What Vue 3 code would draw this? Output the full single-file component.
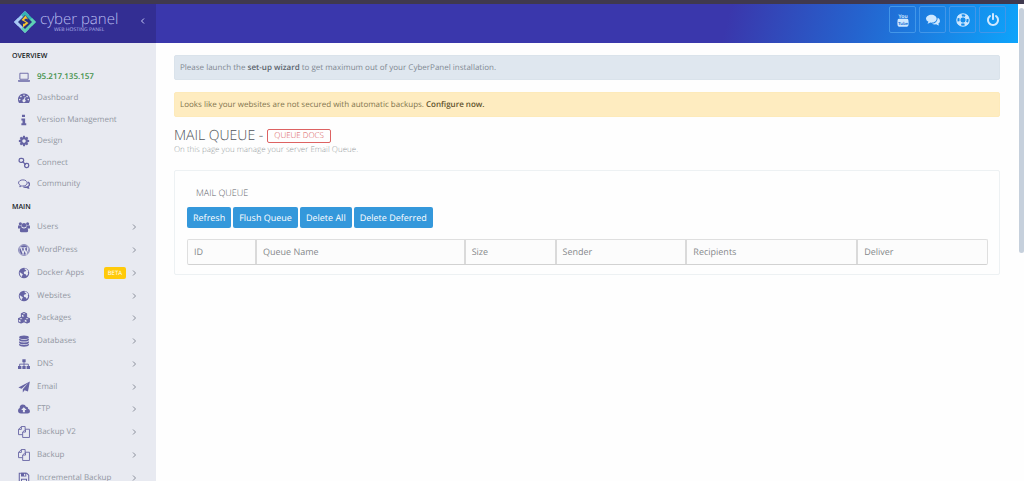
<script setup>
const overview = [
  { icon: 'laptop', label: '95.217.135.157', host: true },
  { icon: 'gauge', label: 'Dashboard' },
  { icon: 'info', label: 'Version Management' },
  { icon: 'cog', label: 'Design' },
  { icon: 'chain', label: 'Connect' },
  { icon: 'comments', label: 'Community' },
]
const main = [
  { icon: 'users', label: 'Users' },
  { icon: 'wordpress', label: 'WordPress' },
  { icon: 'globe', label: 'Docker Apps', badge: 'BETA' },
  { icon: 'globe', label: 'Websites' },
  { icon: 'cubes', label: 'Packages' },
  { icon: 'database', label: 'Databases' },
  { icon: 'sitemap', label: 'DNS' },
  { icon: 'plane', label: 'Email' },
  { icon: 'cloud', label: 'FTP' },
  { icon: 'copy', label: 'Backup V2' },
  { icon: 'copy', label: 'Backup' },
  { icon: 'save', label: 'Incremental Backup' },
]
const sections = [
  { title: 'OVERVIEW', name: 'overview', items: overview },
  { title: 'MAIN', name: 'main', items: main },
]
const actions = ['Refresh', 'Flush Queue', 'Delete All', 'Delete Deferred']
const columns = [
  { name: 'ID', width: 67 },
  { name: 'Queue Name', width: 209 },
  { name: 'Size', width: 91 },
  { name: 'Sender', width: 131 },
  { name: 'Recipients', width: 171 },
  { name: 'Deliver', width: 131 },
]
const total = columns.reduce((sum, c) => sum + c.width, 0)
const tools = [
  { icon: 'youtube', label: 'Video tutorials' },
  { icon: 'chat', label: 'Community forums' },
  { icon: 'ring', label: 'Support' },
  { icon: 'power', label: 'Log out' },
]

const icons = {
  laptop: '<path d="M2.5 3h11v8h-11z" fill="none" stroke="currentColor" stroke-width="1.2"/><path d="M0 12.3h16v1.2q-.5.8-1.500.8h-13q-1 0-1.500-.8z"/>',
  gauge: '<path fill-rule="evenodd" d="M8 2a8 8 0 0 1 6.800 12.200q-.3.500-.8.500H2q-.5 0-.8-.5A8 8 0 0 1 8 2zM8 3.200a1.100 1.100 0 1 0 0 2.200 1.100 1.100 0 0 0 0-2.200zM3.900 5a1.100 1.100 0 1 0 0 2.200 1.100 1.100 0 0 0 0-2.200zM12.100 5a1.100 1.100 0 1 0 0 2.200 1.100 1.100 0 0 0 0-2.200zM2.300 9a1.100 1.100 0 1 0 0 2.200 1.100 1.100 0 0 0 0-2.200zM13.700 9a1.100 1.100 0 1 0 0 2.200 1.100 1.100 0 0 0 0-2.200zM9.100 6.400 8 9.600a2 2 0 1 0 1.200.4l1-3.200z"/>',
  info: '<path d="M5.300 1h4v3h-4zM4.500 6h5v6.200H11V15H4.500v-2.800H6V8.500H4.500z"/>',
  cog: '<path transform="scale(.00893)" d="M1152 896q0-106-75-181t-181-75-181 75-75 181 75 181 181 75 181-75 75-181zm512-109v222q0 12-8 23t-20 13l-185 28q-19 54-39 91 35 50 107 138 10 12 10 25t-9 23q-27 37-99 108t-94 71q-12 0-26-9l-138-108q-44 23-91 38-16 136-29 186-7 28-36 28h-222q-14 0-24.500-8.500t-11.500-21.500l-28-184q-49-16-90-37l-141 107q-10 9-25 9-14 0-25-11-126-114-165-168-7-10-7-23 0-12 8-23 15-21 51-66.500t54-70.500q-27-50-41-99l-183-27q-13-2-21-12.500t-8-23.500v-222q0-12 8-23t19-13l186-28q14-46 39-92-40-57-107-138-10-12-10-24 0-10 9-23 26-36 98.500-107.500t94.500-71.500q13 0 26 10l138 107q44-23 91-38 16-136 29-186 7-28 36-28h222q14 0 24.500 8.500t11.500 21.500l28 184q49 16 90 37l142-107q9-9 24-9 13 0 25 10 129 119 165 170 7 8 7 22 0 12-8 23-15 21-51 66.500t-54 70.500q26 50 41 98l183 28q13 2 21 12.500t8 23.500z"/>',
  chain: '<g fill="none" stroke="currentColor" stroke-width="1.700"><rect x="1.500" y="1.700" width="6" height="5.500" rx="2.300"/><rect x="8.800" y="8.600" width="5.500" height="5.500" rx="2.300"/><path d="m5.800 5.800 4.600 4.600"/></g>',
  comments: '<g fill="none" stroke="currentColor" stroke-width="1.300"><path d="M6.500 2.500c3.300 0 5.800 1.800 5.800 4.100s-2.500 4.100-5.800 4.100q-.8 0-1.500-.2-1 1-2.700 1.200l.9-2C1.700 9 .7 7.900.7 6.600c0-2.300 2.500-4.100 5.800-4.100z"/><path d="M13.300 5.500c1.300.7 2 1.800 2 2.900 0 1.300-.8 2.300-2.100 3l.8 2q-1.800-.2-2.800-1.300-2 .5-4-.2" stroke-width="1.800"/></g>',
  users: '<circle cx="3.200" cy="3.800" r="2.100"/><circle cx="12.800" cy="3.800" r="2.100"/><circle cx="8" cy="5.500" r="3"/><path d="M0 10V7.500q0-1.700 1.500-1.700 1.500.9 3.100.3Q4.500 8 5.300 9 4 9.100 3.200 10zM16 10V7.500q0-1.700-1.500-1.700-1.500.9-3.100.3.100 1.900-.7 2.900 1.300.1 2.100 1zM2.500 13q0-4 2.700-4Q8 10.900 10.800 9q2.700 0 2.700 4 0 2-2.200 2H4.700q-2.200 0-2.200-2z"/>',
  wordpress: '<circle cx="8" cy="8" r="7.200" fill="none" stroke="currentColor" stroke-width="1"/><circle cx="8" cy="8" r="6.200"/><path d="M2.600 5h3.800M7 5h4M3.800 5l3 7.700L8.700 7M8 5l3 7.700L13 7q.2-1.500-1-2.600" fill="none" stroke="#e8eaf2" stroke-width="1.500"/>',
  globe: '<circle cx="8" cy="8" r="7"/><path fill="#e8eaf2" d="M8.200 2.300 10 1.900l2.600 1.600 1.200 2.400-.8 1.400.6 1.300-1.100 2.500-1.400.6-.8-2-1.900-.5-.8-2 1.500-1.700 1.600.1.200-1-1.400-.8zM2.300 6.700l2 1.500 1.900 1.100.1 1.200-1.100 1.100.2 1.800-1.700-1.200-1.200-2.400z"/>',
  cubes: '<g fill="none" stroke="currentColor" stroke-width="1.400" stroke-linejoin="round"><path d="M8 .8 11.500 2.300v4L8 8 4.500 6.300v-4zM4.500 2.300 8 4l3.500-1.700M8 4v4M4 7.300l3.700 1.600v4L4 14.700.3 12.900v-4zM.3 8.900 4 10.600l3.700-1.700M4 10.600v4.100M12 7.300l3.700 1.600v4L12 14.700l-3.700-1.800v-4zM8.300 8.900l3.700 1.700 3.700-1.700M12 10.600v4.100"/></g><path d="m8 4 3.500-1.700v4L8 8zM4 10.600l3.700-1.700v4L4 14.700zM12 10.600l3.700-1.700v4L12 14.700z"/>',
  database: '<ellipse cx="8" cy="3" rx="6.500" ry="2.500"/><path d="M1.500 4.800q2 1.700 6.500 1.700t6.500-1.700v1.900Q13.500 8.800 8 8.800T1.500 6.700zM1.500 8.300q2 1.700 6.500 1.700t6.500-1.700v1.900q-1 2.100-6.500 2.100t-6.500-2.100zM1.500 11.700q2 1.700 6.500 1.700t6.500-1.700v1.700q-1 2.100-6.500 2.100t-6.500-2.100z"/>',
  sitemap: '<path d="M5.800 1.500h4.400v4H5.800zM0 10.800h4.500v4H0zM5.800 10.800h4.400v4H5.800zM11.500 10.800H16v4h-4.500z"/><path d="M8 5v6M2.200 11V8.200h11.600V11" fill="none" stroke="currentColor" stroke-width="1.200"/>',
  plane: '<path d="M15.800.5 13.300 14l-4.500-1.800-2.400 3v-4.100l7.100-8.300-8.700 7.600L.5 8.800z"/>',
  cloud: '<path fill-rule="evenodd" d="M4 14Q0 13.600 0 10.300q0-2.500 2.300-3.500Q2.100 2.300 6.500 2q3.200 0 4.200 3 2.800-.5 2.800 2.500Q16 8.200 16 10.900q0 3.100-3.300 3.100zM7.700 5.500 4.200 9.200h2.300v3h2.700v-3h2.300z"/>',
  copy: '<g fill="none" stroke="currentColor" stroke-width="1.200" stroke-linejoin="round"><path d="M6 11.500H.7V4.500l3.800-3.800h5v3.500M4.500.7v3.800H.7M10 4.300h5.300v11H6.200V8.100zM10 4.300v3.800H6.200"/></g>',
  save: '<path d="M1.700 1.700h10l2.600 2.600v10H1.700z" fill="none" stroke="currentColor" stroke-width="1.400"/><path fill-rule="evenodd" d="M4 1h7v5H4zm4 1v3h1.700V2zM4 9h8v6H4zm1.300 1.200v4h5.400v-4z"/>',
  youtube: '<text x="8" y="5.600" text-anchor="middle" font-family="Liberation Sans Narrow, Liberation Sans, sans-serif" font-weight="700" font-size="6">You</text><path d="M3.500 6.700h9q1.500 0 1.700 1.600.4 2.900 0 5.800-.2 1.600-1.700 1.600h-9q-1.500 0-1.700-1.600-.4-2.900 0-5.800.2-1.600 1.700-1.600z"/><text x="8" y="13.200" fill="#2274d8" text-anchor="middle" font-family="Liberation Sans Narrow, Liberation Sans, sans-serif" font-weight="700" font-size="5">Tube</text>',
  chat: '<path d="M6.200 2c3.400 0 6 2 6 4.500s-2.600 4.500-6 4.500l-1.300-.1q-1.500 1.300-3.200 1.300l1.100-2.100Q0 8.800 0 6.500C0 4 2.800 2 6.200 2z"/><path d="M13.400 5.400Q16 6.600 16 9q0 2-2 3.200l1 2.200q-2.300-.3-3.300-1.500-2.900.5-5-.7 6.400-.6 6.700-6.800z"/>',
  ring: '<circle cx="8" cy="8" r="5.400" fill="none" stroke="currentColor" stroke-width="3.600" stroke-dasharray="4.800 3.682" stroke-dashoffset="2.400" transform="rotate(45 8 8)"/><circle cx="8" cy="8" r="7.100" fill="none" stroke="currentColor" stroke-width="1.300"/><circle cx="8" cy="8" r="3.600" fill="none" stroke="currentColor" stroke-width="1.100"/>',
  power: '<path transform="scale(.00893)" d="M1664 896q0 156-61 298t-164 245-245 164-298 61-298-61-245-164-164-245-61-298q0-182 80.500-343t226.500-270q43-32 95.500-25t83.500 50q32 42 24.500 94.500t-49.500 84.500q-98 74-151.500 181t-53.500 228q0 104 40.500 198.500t109.500 163.500 163.500 109.500 198.500 40.500 198.500-40.500 163.500-109.500 109.500-163.500 40.500-198.500q0-121-53.500-228t-151.500-181q-42-32-49.500-84.500t24.500-94.500q31-43 84-50t95 25q146 109 226.500 270t80.500 343zm-640-768v640q0 52-38 90t-90 38-90-38-38-90v-640q0-52 38-90t90-38 90 38 38 90z"/>',
}
</script>

<template>
  <div class="page">
    <div class="strip"></div>
    <div class="frame">
      <aside class="sidebar">
        <div class="brand">
          <svg class="logo" viewBox="0 0 24 24" aria-hidden="true">
            <path d="M12 1 1 12l4 4L16 5z" fill="#9ccbf6" />
            <path d="m12 1 11 11-4 4L8 5z" fill="#35b3b4" />
            <path d="m1 12 11 11 4-4L5 8z" fill="#a9c8f5" />
            <path d="M23 12 12 23l-4-4L19 8z" fill="#5fd0b4" />
            <path d="m12 5 7 7-7 7-7-7z" fill="#29307f" />
            <path d="m12.500 5.500-4 4.500 4.500 2.500-2 1.500-1-.5v4l5.500-4.500-4.500-3 2-1.500 2 1z" fill="#f7c52d" />
          </svg>
          <div class="wordmark">
            <span class="name">cyber panel</span>
            <span class="tag">WEB HOSTING PANEL</span>
          </div>
          <button class="collapse" type="button" aria-label="Collapse menu">
            <svg viewBox="0 0 6 8"><path d="M4 1.500 1.500 4 4 6.500" /></svg>
          </button>
        </div>
        <nav aria-label="Main menu">
          <section v-for="s in sections" :key="s.name">
            <h2 class="group">{{ s.title }}</h2>
            <ul class="menu" :class="s.name">
              <li v-for="item in s.items" :key="item.label">
                <a href="#" class="item" :class="{ host: item.host }">
                  <svg class="icon" viewBox="0 0 16 16" aria-hidden="true" v-html="icons[item.icon]"></svg>
                  <span class="label">{{ item.label }}</span>
                  <span v-if="item.badge" class="badge">{{ item.badge }}</span>
                  <svg v-if="s.name === 'main'" class="arrow" viewBox="0 0 6 8" aria-hidden="true"><path d="M2 1.500 4.500 4 2 6.500" /></svg>
                </a>
              </li>
            </ul>
          </section>
        </nav>
      </aside>

      <div class="body">
        <header class="header">
          <a v-for="t in tools" :key="t.icon" href="#" class="tool" :aria-label="t.label">
            <svg viewBox="0 0 16 16" aria-hidden="true" v-html="icons[t.icon]"></svg>
          </a>
        </header>
        <main class="content">
          <p class="alert blue">Please launch the <a href="#">set-up wizard</a> to get maximum out of your CyberPanel installation.</p>
          <p class="alert yellow">Looks like your websites are not secured with automatic backups. <a href="#">Configure now.</a></p>
          <div class="title">
            <h1>MAIL QUEUE -</h1>
            <a href="#" class="docs">QUEUE DOCS</a>
          </div>
          <p class="subtitle">On this page you manage your server Email Queue.</p>
          <section class="panel">
            <h3>MAIL QUEUE</h3>
            <div class="actions">
              <button v-for="a in actions" :key="a" type="button">{{ a }}</button>
            </div>
            <table>
              <colgroup>
                <col v-for="c in columns" :key="c.name" :style="{ width: (c.width / total) * 100 + '%' }" />
              </colgroup>
              <thead>
                <tr><th v-for="c in columns" :key="c.name" scope="col">{{ c.name }}</th></tr>
              </thead>
            </table>
          </section>
        </main>
      </div>
      <div class="track"><div class="thumb"></div></div>
    </div>
  </div>
</template>

<style>
body { background: #fefefe; }
</style>

<style scoped>
* { box-sizing: border-box; }
h1, h2, h3, p, ul { margin: 0; padding: 0; font-weight: 400; }
a { color: inherit; text-decoration: none; }
button { font: inherit; border: 0; margin: 0; cursor: pointer; text-rendering: inherit; }
svg { display: block; fill: currentColor; }

.page {
  display: flex;
  flex-direction: column;
  height: 100vh;
  overflow: hidden;
  font: 8px/12px "Open Sans", sans-serif;
  text-rendering: geometricPrecision;
  color: #7f8790;
}
.strip { flex: none; height: 4px; background: #40394f; }
.frame { flex: 1; display: flex; min-height: 0; }

.sidebar { flex: none; width: 156px; background: #e8eaf1; overflow: hidden; }
.brand {
  display: flex;
  align-items: center;
  height: 39px;
  padding: 0 10px 3px 13px;
  background: #332e93;
  color: #b9bdf0;
}
.logo { width: 24px; height: 24px; }
.wordmark { display: flex; flex-direction: column; align-items: center; margin-left: 3px; }
.name { font-size: 15px; line-height: 17px; font-weight: 300; white-space: nowrap; }
.tag { font-size: 5px; line-height: 5px; }
.collapse { margin-left: auto; padding: 0 0 3px; background: none; color: #c7caf5; }
.collapse svg, .arrow { width: 6px; height: 8px; fill: none; stroke: currentColor; stroke-width: 1; }

nav { padding-top: 1px; }
.group { padding: 7px 12px 3px; font-size: 7px; line-height: 12px; font-weight: 600; color: #16181c; }
section + section .group { padding-bottom: 2px; }
.menu { display: grid; grid-auto-rows: 1fr; list-style: none; }
.overview { height: 129px; }
.main { height: 273px; }
.item {
  display: flex;
  align-items: center;
  height: 100%;
  padding: 0 18px;
  color: #9297a2;
  white-space: nowrap;
}
.icon { width: 12px; height: 12px; margin-right: 7px; color: #6664a4; }
.host .label { color: #43924b; font-weight: 600; }
.label { flex: 1; }
.badge {
  margin-right: 4px;
  padding: 0 4px;
  border-radius: 2px;
  background: #ffca0a;
  color: #fff;
  font-size: 6px;
}
.arrow { margin: 0 1px; color: #8a8f9b; }

.body { flex: 1; min-width: 0; }
.header {
  display: flex;
  justify-content: flex-end;
  gap: 3px;
  height: 39px;
  padding: 2px 12px;
  background: linear-gradient(105deg, #3a37ac 0%, #3a37ac 66%, #2563ce 81%, #0da4fb 100%);
}
.tool {
  display: grid;
  place-items: center;
  width: 27px;
  height: 27px;
  border: 1px solid #4396e8;
  border-radius: 2px;
  color: #cfe8ff;
}
.tool svg { width: 14px; height: 14px; }

.content { padding: 12px 18px; }
.alert { margin-bottom: 12px; padding: 5px; border: 1px solid; border-radius: 2px; line-height: 13px; }
.alert a { font-weight: 600; }
.blue { background: #dfe7ef; color: #7f8993; border-color: #dae3eb; }
.yellow { margin-bottom: 10px; background: #feecc0; color: #82754f; border-color: #fdeaba; }
.blue a { color: #59626b; }
.yellow a { color: #61522d; }

.title { display: flex; align-items: center; gap: 4px; }
h1 { font-size: 14px; line-height: 17px; font-weight: 300; color: #50545a; }
.docs {
  padding: 0 6px;
  border: 1px solid #dd6262;
  border-radius: 2px;
  color: #d85555;
  font-size: 8px;
  line-height: 12px;
  font-weight: 300;
}
.subtitle { font-weight: 300; color: #9a9ea3; }
.panel { margin-top: 14px; padding: 15px 11px 9px 12px; border: 1px solid #edf1f3; border-radius: 2px; }
h3 { padding-left: 9px; font-size: 9px; line-height: 14px; font-weight: 300; color: #5b6067; }
.actions { display: flex; gap: 2px; margin: 7px 0 11px; }
.actions button {
  padding: 4px 6px;
  border-radius: 2px;
  background: #3498db;
  color: #fff;
  font-size: 9px;
  line-height: 13px;
}
table { width: 100%; table-layout: fixed; border-collapse: separate; border-spacing: 0; border: 1px solid #dfdfdf; border-bottom-color: #d2d2d2; border-radius: 2px; background: #fcfcfc; }
th { height: 24px; padding: 0 6px; text-align: left; font-size: 9px; font-weight: 400; color: #85888b; }
th + th { border-left: 2px solid #dadada; }

.track { flex: none; width: 6px; padding: 4px 0 0 1px; }
.thumb { height: 245px; border-radius: 3px; background: #c6d0dc; }
</style>
